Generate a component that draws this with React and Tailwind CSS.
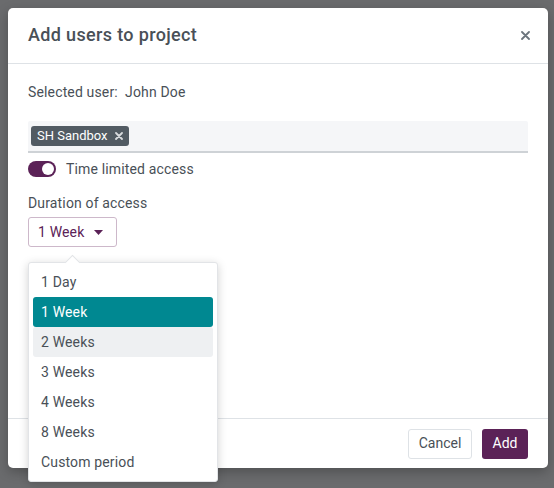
import React from "react";

export default function App() {
  const items = ["1 Day", "1 Week", "2 Weeks", "3 Weeks", "4 Weeks", "8 Weeks", "Custom period"];
  return (
    <div
      className="w-[554px] h-[488px] bg-[#6a6b6d] relative overflow-hidden pt-2 pl-2"
      style={{ fontFamily: "Roboto, 'Liberation Sans', sans-serif" }}
    >
      <div className="w-[540px] h-[460px] bg-white rounded-[5px] flex flex-col shadow-[0_4px_12px_rgba(0,0,0,0.25)]">
        <div className="h-[56px] pl-5 pr-[18px] border-b border-[#dee2e6] flex items-center justify-between shrink-0">
          <h2 className="text-[18px] font-medium text-[#495057] leading-none tracking-[0.35px] -mt-[1px]">Add users to project</h2>
          <svg width="9" height="9" viewBox="0 0 9 9" className="-mt-[1px]">
            <path d="M1 1L8 8M8 1L1 8" stroke="#6c757d" strokeWidth="1.8" strokeLinecap="round" />
          </svg>
        </div>
        <div className="flex-1 px-5 pt-[18px] text-[14px] text-[#495057] tracking-[0.15px]">
          <div className="leading-5">Selected user:&nbsp; John Doe</div>
          <div className="mt-[19px] h-[32px] bg-[#f5f6f8] border-b-2 border-[#ced2d6] rounded-t-[2px] flex items-center pl-[3px]">
            <span className="h-[20px] px-[6px] rounded-[3px] bg-[#525b63] text-white text-[13px] tracking-normal flex items-center gap-[7px]">
              SH Sandbox
              <svg width="8" height="8" viewBox="0 0 8 8">
                <path d="M1 1L7 7M7 1L1 7" stroke="#d8dbde" strokeWidth="1.8" strokeLinecap="round" />
              </svg>
            </span>
          </div>
          <div className="mt-[8px] flex items-center gap-[10px] h-[16px]">
            <span className="w-[28px] h-[16px] rounded-full bg-[#5b2257] relative">
              <span className="absolute right-[2px] top-[2px] w-[12px] h-[12px] rounded-full bg-white" />
            </span>
            <span>Time limited access</span>
          </div>
          <div className="mt-[16px] leading-5">Duration of access</div>
          <div className="mt-[4px] w-[89px] h-[30px] border border-[#cdb8ca] rounded-[3px] flex items-center pl-[9px] gap-[10px] text-[#5b2257]">
            <span>1 Week</span>
            <svg width="9" height="5" viewBox="0 0 9 5">
              <path d="M0 0H9L4.5 5Z" fill="#5b2257" />
            </svg>
          </div>
        </div>
        <div className="h-[50px] border-t border-[#dee2e6] flex items-center justify-end gap-[10px] px-5 shrink-0">
          <button className="h-[30px] w-[64px] border border-[#dee2e6] rounded-[3px] text-[14px] text-[#495057] bg-white">
            Cancel
          </button>
          <button className="h-[30px] w-[46px] rounded-[3px] text-[14px] text-white bg-[#5b2257]">Add</button>
        </div>
      </div>

      <div className="absolute left-[28px] top-[262px] w-[190px] bg-white rounded-[3px] border border-[#e2e4e7] shadow-[0_2px_10px_rgba(0,0,0,0.18)] p-[4px] text-[14px] text-[#495057] tracking-[0.15px]">
        <div className="absolute -top-[6px] left-[38px] w-[11px] h-[11px] bg-white rotate-45 border-l border-t border-[#e2e4e7]" />
        {items.map((it, i) => (
          <div
            key={it}
            className={
              "relative h-[30px] flex items-center px-[8px] rounded-[3px] " +
              (i === 1 ? "bg-[#008891] text-white" : i === 2 ? "bg-[#eef0f2]" : "")
            }
          >
            {it}
          </div>
        ))}
      </div>
    </div>
  );
}
